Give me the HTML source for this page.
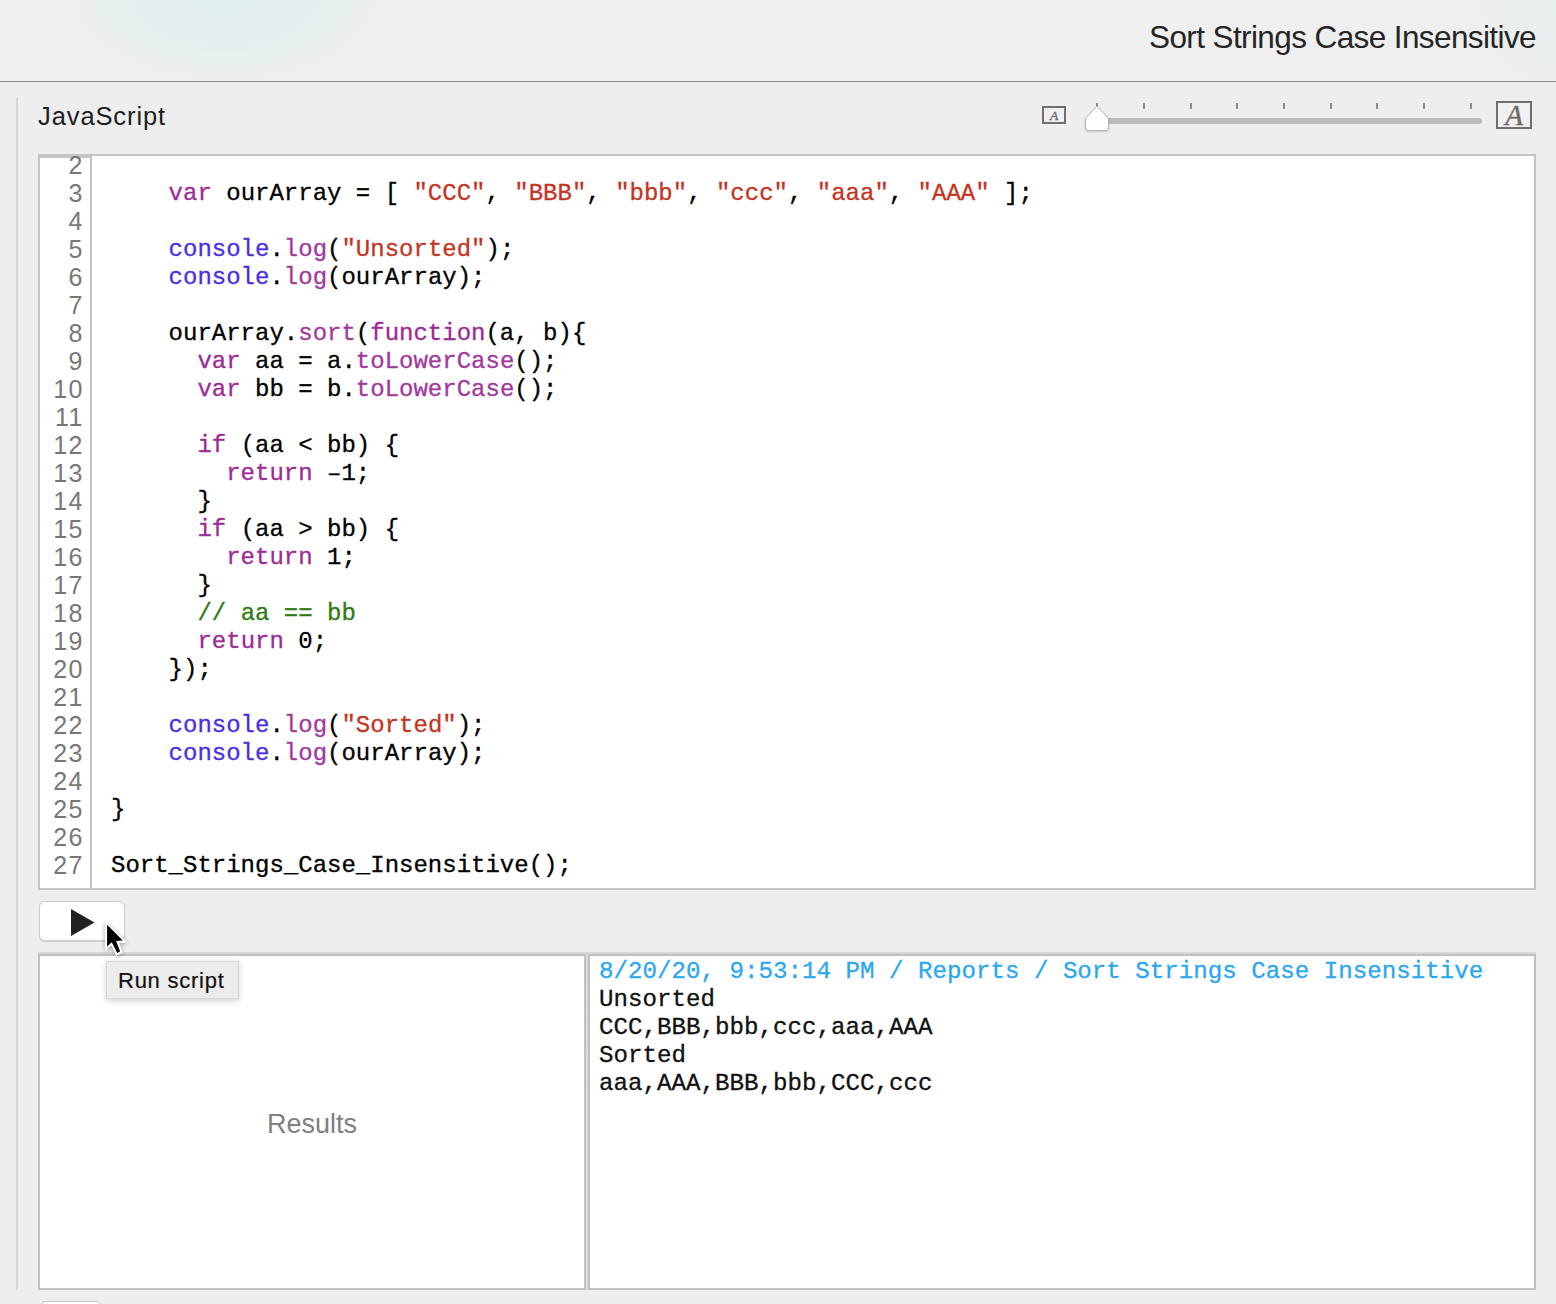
<!DOCTYPE html>
<html>
<head>
<meta charset="utf-8">
<style>
html,body{margin:0;padding:0;}
body{width:1556px;height:1304px;overflow:hidden;background:#eeeeee;position:relative;font-family:"Liberation Sans",sans-serif;}
.abs{position:absolute;}
#topbar{left:0;top:0;width:1556px;height:81px;background:#efefef;overflow:hidden;}
#blob{left:70px;top:-100px;width:310px;height:180px;border-radius:50%;background:radial-gradient(ellipse at center,#dfeded 0%,#e2eeee 35%,#e8efef 55%,rgba(239,239,239,0) 71%);}
#blob2{left:1470px;top:-90px;width:200px;height:190px;border-radius:50%;background:radial-gradient(ellipse at center,#e6eeee 0%,rgba(239,239,239,0) 70%);}
#topline{left:0;top:81px;width:1556px;height:1px;background:#8e8e8e;}
#title{right:20px;top:0;height:81px;line-height:1;font-size:31.5px;letter-spacing:-0.6px;color:#252525;white-space:nowrap;}
#vline{left:16px;top:98px;width:2px;height:1192px;background:#d5d5d5;}
#jslabel{left:38px;font-size:25.5px;letter-spacing:0.9px;color:#1e1e1e;white-space:nowrap;line-height:1;}
.code{font-family:"Liberation Mono",monospace;font-size:24px;white-space:pre;line-height:28px;-webkit-text-stroke:0.3px currentColor;}
#editor{left:38px;top:154px;width:1494px;height:732px;border:2px solid #c4c4c4;background:#fff;overflow:hidden;}
#gutter{left:0;top:0;width:52px;height:732px;border-top:2px solid #c4c4c4;border-right:2px solid #c4c4c4;box-sizing:border-box;}
.ln{position:absolute;right:10px;font-size:24px;color:#777777;line-height:28px;white-space:nowrap;}
.cl{position:absolute;left:72px;color:#000;}
.k{color:#9e2a95;}
.m{color:#a3389c;}
.c{color:#4b2de6;}
.s{color:#c4341f;}
.g{color:#2f7b15;}
#runbtn{left:39px;top:901px;width:84px;height:38px;background:#fff;border:1px solid #cfcfcf;border-radius:6px;box-shadow:0 0.5px 1px rgba(0,0,0,0.15);}
#resband{left:38px;top:952px;width:1498px;height:2px;background:#d7d7d7;}
#resL{left:38px;top:954px;width:544px;height:332px;border:2px solid #c1c1c1;background:#fff;}
#resMid{left:586px;top:954px;width:2px;height:336px;background:#d9d9d9;}
#resR{left:588px;top:954px;width:944px;height:332px;border:2px solid #c1c1c1;background:#fff;}
#resultsLabel{left:0;width:544px;text-align:center;font-size:27px;color:#808080;line-height:1;}
#tooltip{left:105.5px;top:961px;width:131px;height:35.5px;background:#ececec;border:1px solid #d6d6d6;box-shadow:0 2px 6px rgba(0,0,0,0.18);}
#tiptext{left:11.5px;font-size:22px;letter-spacing:0.75px;-webkit-text-stroke:0.2px #111;color:#111;line-height:1;white-space:nowrap;}
#nums{left:0;top:-5px;width:44px;text-align:right;font-size:25px;letter-spacing:1.5px;line-height:28px;color:#777;}
#codeblk{left:71px;top:-4px;color:#000;}
#restext{left:9px;top:2px;color:#111;font-size:24.17px;}
.b{color:#2ba7ef;}
#botbtn{left:40px;top:1301px;width:60px;height:20px;background:#fff;border:1px solid #c8c8c8;border-radius:6px;}
</style>
</head>
<body>
<div id="topbar" class="abs"><div id="blob" class="abs"></div><div id="blob2" class="abs"></div></div>
<div id="topline" class="abs"></div>
<div id="title" class="abs" style="top:22px">Sort Strings Case Insensitive</div>
<div id="vline" class="abs"></div>
<div id="jslabel" class="abs" style="top:104px">JavaScript</div>

<!-- slider -->
<svg class="abs" style="left:1030px;top:95px" width="510" height="45" viewBox="0 0 510 45">
  <rect x="13" y="12" width="22" height="16" fill="#f0f0f0" stroke="#6f6f6f" stroke-width="2"/>
  <text x="24" y="24.8" font-family="Liberation Serif" font-style="italic" font-size="13.5" fill="#6a6a6a" stroke="#6a6a6a" stroke-width="0.35" text-anchor="middle">A</text>
  <rect x="55" y="23" width="397" height="6" rx="3" fill="#bababa"/>
  <g fill="#8a8a8a">
    <rect x="66" y="8" width="2" height="6"/>
    <rect x="113" y="8" width="2" height="6"/>
    <rect x="160" y="8" width="2" height="6"/>
    <rect x="206" y="8" width="2" height="6"/>
    <rect x="253" y="8" width="2" height="6"/>
    <rect x="300" y="8" width="2" height="6"/>
    <rect x="346" y="8" width="2" height="6"/>
    <rect x="393" y="8" width="2" height="6"/>
    <rect x="440" y="8" width="2" height="6"/>
  </g>
  <path d="M67 11 L78 23 Q78.5 24 78.5 25 L78.5 32.5 Q78.5 35.5 75.5 35.5 L58.5 35.5 Q55.5 35.5 55.5 32.5 L55.5 25 Q55.5 24 56 23 Z" fill="#fff" stroke="#b5b5b5" stroke-width="1" style="filter:drop-shadow(0 1px 1px rgba(0,0,0,0.18))"/>
  <rect x="467" y="7" width="34" height="26" fill="#f0f0f0" stroke="#6f6f6f" stroke-width="2"/>
  <text x="484" y="29.7" font-family="Liberation Serif" font-style="italic" font-size="29" fill="#6a6a6a" stroke="#6a6a6a" stroke-width="0.4" text-anchor="middle">A</text>
</svg>

<div id="editor" class="abs">
  <div id="gutter" class="abs"></div>
  <!--LINES--><div id="lines"><div id="nums" class="abs">2<br>3<br>4<br>5<br>6<br>7<br>8<br>9<br>10<br>11<br>12<br>13<br>14<br>15<br>16<br>17<br>18<br>19<br>20<br>21<br>22<br>23<br>24<br>25<br>26<br>27</div><div id="codeblk" class="abs code">
    <span class="k">var</span> ourArray = [ <span class="s">"CCC"</span>, <span class="s">"BBB"</span>, <span class="s">"bbb"</span>, <span class="s">"ccc"</span>, <span class="s">"aaa"</span>, <span class="s">"AAA"</span> ];

    <span class="c">console</span>.<span class="m">log</span>(<span class="s">"Unsorted"</span>);
    <span class="c">console</span>.<span class="m">log</span>(ourArray);

    ourArray.<span class="m">sort</span>(<span class="k">function</span>(a, b){
      <span class="k">var</span> aa = a.<span class="m">toLowerCase</span>();
      <span class="k">var</span> bb = b.<span class="m">toLowerCase</span>();

      <span class="k">if</span> (aa &lt; bb) {
        <span class="k">return</span> &#8211;1;
      }
      <span class="k">if</span> (aa &gt; bb) {
        <span class="k">return</span> 1;
      }
      <span class="g">// aa == bb</span>
      <span class="k">return</span> 0;
    });

    <span class="c">console</span>.<span class="m">log</span>(<span class="s">"Sorted"</span>);
    <span class="c">console</span>.<span class="m">log</span>(ourArray);

}

Sort_Strings_Case_Insensitive();</div></div><!--/LINES-->
</div>

<div id="runbtn" class="abs">
  <svg class="abs" style="left:30px;top:6px" width="26" height="30"><path d="M1 1 L24.5 14.5 L1 28 Z" fill="#222"/></svg>
</div>

<div id="resband" class="abs"></div>
<div id="resL" class="abs"><div id="resultsLabel" class="abs" style="top:155px">Results</div></div>
<div id="resMid" class="abs"></div>
<div id="resR" class="abs"><div id="restext" class="abs code"><span class="b">8/20/20, 9:53:14 PM / Reports / Sort Strings Case Insensitive</span>
Unsorted
CCC,BBB,bbb,ccc,aaa,AAA
Sorted
aaa,AAA,BBB,bbb,CCC,ccc</div></div>

<div id="tooltip" class="abs"><div id="tiptext" class="abs" style="top:7.5px">Run script</div></div>

<div id="botbtn" class="abs"></div>
<svg class="abs" style="left:95px;top:912px;overflow:visible" width="40" height="50" viewBox="95 912 40 50">
  <path d="M104.9 920.9 L104.9 951.6 L111.5 945.4 L116 955.7 L122.8 953 L119.2 943.3 L127.7 942.6 Z" fill="#fff" style="filter:drop-shadow(0 1.5px 2px rgba(0,0,0,0.35))"/>
  <path d="M107.1 924.8 L107.1 946.6 L111.8 942.3 L117.2 953 L120.1 951.6 L116.1 941.1 L122.8 940.5 Z" fill="#000"/>
</svg>

</body>
</html>
